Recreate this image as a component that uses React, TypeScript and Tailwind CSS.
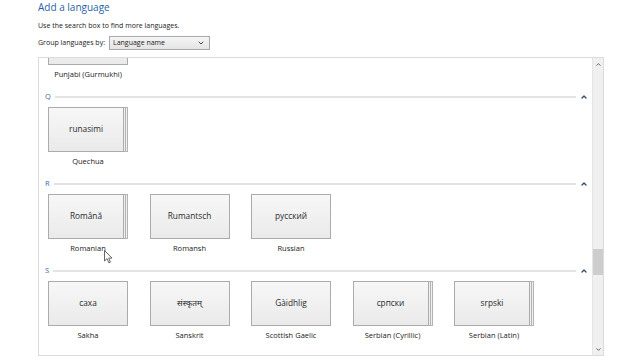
import { ChevronDown, ChevronUp } from "lucide-react"

type Lang = { native: string; name: string; stacked?: boolean }

const sections: { letter: string; langs: Lang[] }[] = [
  { letter: "Q", langs: [{ native: "runasimi", name: "Quechua", stacked: true }] },
  {
    letter: "R",
    langs: [
      { native: "Română", name: "Romanian", stacked: true },
      { native: "Rumantsch", name: "Romansh" },
      { native: "русский", name: "Russian" },
    ],
  },
  {
    letter: "S",
    langs: [
      { native: "саха", name: "Sakha" },
      { native: "संस्कृतम्", name: "Sanskrit" },
      { native: "Gàidhlig", name: "Scottish Gaelic" },
      { native: "српски", name: "Serbian (Cyrillic)", stacked: true },
      { native: "srpski", name: "Serbian (Latin)", stacked: true },
    ],
  },
]

const font = { fontFamily: "'Open Sans', 'Noto Sans', 'Noto Sans Devanagari', sans-serif" }

function Tile({ lang }: { lang: Lang }) {
  return (
    <div className="flex w-[80px] flex-col items-center">
      <div className="flex h-[45px] w-[80px]">
        <div
          className={`flex h-full items-center justify-center border border-[#ababab] bg-gradient-to-b from-[#f7f7f7] to-[#eaeaea] text-[8.3px] text-[#2a2a2a] ${
            lang.stacked ? "w-[76px]" : "w-[80px]"
          }`}
        >
          {lang.native}
        </div>
        {lang.stacked && (
          <>
            <div className="h-full w-[2px] border-y border-r border-[#b3b3b3] bg-[#f0f0f0]" />
            <div className="h-full w-[2px] border-y border-r border-[#b3b3b3] bg-[#f0f0f0]" />
          </>
        )}
      </div>
      <div className="mt-[3px] h-[12px] whitespace-nowrap text-[7.5px] leading-[12px] text-[#222]">
        {lang.name}
      </div>
    </div>
  )
}

function Header({ letter }: { letter: string }) {
  return (
    <div className="flex h-[12px] items-center pl-[6px] pr-[4px]">
      <span className="text-[7.5px] text-[#3b6aa8]">{letter}</span>
      <div className="ml-[4px] h-[2px] flex-1 bg-[#e3e3e3]" />
      <ChevronUp size={8} strokeWidth={4} className="ml-[4px] text-[#3a4a66]" />
    </div>
  )
}

export default function App() {
  return (
    <div className="relative h-[360px] w-[640px] overflow-hidden bg-white pl-[38px]" style={font}>
      {/* ── Title + description ── */}
      <div className="h-[16px] pt-[1px] text-[10px] leading-[12px] text-[#1f5fa8]">Add a language</div>
      <div className="mt-[4px] whitespace-nowrap text-[7px] leading-[12px] text-[#222]">
        Use the search box to find more languages.
      </div>
      <div className="mt-[4px] flex h-[14px] items-center whitespace-nowrap text-[7px] leading-[10px] text-[#222]">
        <span className="shrink-0 pr-[1px]">Group languages by:</span>
        <div className="ml-[3px] flex h-[14px] w-[101px] shrink-0 items-center justify-between border border-[#a9a9a9] bg-gradient-to-b from-[#f5f5f5] to-[#e4e4e4] pl-[3px] pr-[4px]">
          <span className="leading-[10px]">Language name</span>
          <ChevronDown size={8} strokeWidth={3} className="text-[#444]" />
        </div>
      </div>

      {/* ── Language list ── */}
      <div className="mt-[7px] flex h-[299px] w-[566px] border border-[#dcdcdc]">
        <div className="flex-1 overflow-hidden">
          <div className="-mt-[38px] pl-[9px]">
            <Tile lang={{ native: "ਪੰਜਾਬੀ", name: "Punjabi (Gurmukhi)" }} />
          </div>
          {sections.map((s) => (
            <div key={s.letter} className="mt-[11px]">
              <Header letter={s.letter} />
              <div className="mt-[4px] flex gap-[21.5px] pl-[9px]">
                {s.langs.map((l) => (
                  <Tile key={l.name} lang={l} />
                ))}
              </div>
            </div>
          ))}
        </div>

        {/* scrollbar */}
        <div className="flex w-[11px] flex-col items-center border-l border-[#e6e6e6] bg-[#f0f0f0]">
          <ChevronUp size={7} strokeWidth={3} className="mt-[3px] text-[#555]" />
          <div className="mt-[181px] h-[26px] w-[10px] bg-[#cdcdcd]" />
          <div className="flex-1" />
          <ChevronDown size={7} strokeWidth={3} className="mb-[2px] text-[#555]" />
        </div>
      </div>

      {/* mouse cursor */}
      <svg
        className="absolute left-[104px] top-[250px]"
        width="9"
        height="14"
        viewBox="0 0 9 14"
      >
        <path d="M0.5 0.5 L0.5 11 L3 8.6 L4.8 12.8 L6.4 12.1 L4.7 8.1 L8 8.1 Z" fill="white" stroke="#555" strokeWidth="0.9" />
      </svg>
    </div>
  )
}
